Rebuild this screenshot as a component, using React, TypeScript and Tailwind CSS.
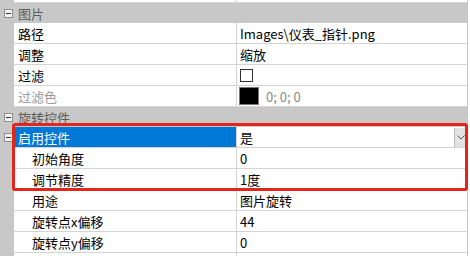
import React from "react";

type Row = {
  label: string;
  value?: string;
  indent?: boolean;
  disabled?: boolean;
  checkbox?: boolean;
  color?: boolean;
  selected?: boolean;
  toggle?: boolean;
  dropdown?: boolean;
};

const sections: { title: string; rows: Row[] }[] = [
  {
    title: "图片",
    rows: [
      { label: "路径", value: "Images\\仪表_指针.png" },
      { label: "调整", value: "缩放" },
      { label: "过滤", checkbox: true },
      { label: "过滤色", disabled: true, color: true, value: "0; 0; 0" },
    ],
  },
  {
    title: "旋转控件",
    rows: [
      { label: "启用控件", value: "是", selected: true, toggle: true, dropdown: true },
      { label: "初始角度", value: "0", indent: true },
      { label: "调节精度", value: "1度", indent: true },
      { label: "用途", value: "图片旋转", indent: true },
      { label: "旋转点x偏移", value: "44", indent: true },
      { label: "旋转点y偏移", value: "0", indent: true },
    ],
  },
];

function Toggle() {
  return (
    <span className="ml-[4px] flex h-[9px] w-[9px] items-center justify-center border border-[#8e8e8e] bg-[#f3f3f3]">
      <span className="h-px w-[5px] bg-[#333]" />
    </span>
  );
}

function PropRow({ row }: { row: Row }) {
  return (
    <div className="flex h-[21px]">
      <div className="flex w-[14px] items-center bg-[#c8c8c8]">{row.toggle && <Toggle />}</div>
      <div className="flex flex-1 border-b border-[#d4d4d4]">
        <div
          className={`flex w-[223px] items-center border-r border-[#d4d4d4] ${
            row.indent ? "pl-[18px]" : "pl-[4px]"
          } ${row.selected ? "bg-[#0078d7] text-white" : row.disabled ? "text-[#9a9a9a]" : "text-black"}`}
        >
          {row.label}
        </div>
        <div className="flex flex-1 items-center pl-[3px] text-black">
          {row.checkbox && <span className="h-[13px] w-[13px] border border-[#333] bg-white" />}
          {row.color && (
            <>
              <span className="ml-[-1px] h-[18px] w-[20px] border border-[#777] bg-black" />
              <span className="ml-[7px] text-[#8a8a8a]">{row.value}</span>
            </>
          )}
          {!row.color && row.value && <span>{row.value}</span>}
          {row.dropdown && (
            <span className="ml-auto flex h-[19px] w-[13px] items-center justify-center border-l border-[#b9b9b9] bg-[#e3e3e3]">
              <svg width="8" height="5" viewBox="0 0 8 5" fill="none">
                <path d="M0.5 0.5 L4 4 L7.5 0.5" stroke="#555" strokeWidth="1" />
              </svg>
            </span>
          )}
        </div>
      </div>
    </div>
  );
}

export default function App() {
  return (
    <div className="relative h-[256px] w-[470px] overflow-hidden bg-white font-['Microsoft_YaHei','Noto_Sans_CJK_SC',sans-serif] text-[13px] leading-none">
      <div className="w-[468px] border-r border-[#c8c8c8]">
        <div className="flex h-[3px]">
          <div className="w-[14px] bg-[#c8c8c8]" />
          <div className="flex flex-1 border-b border-[#d4d4d4]">
            <div className="w-[223px] border-r border-[#d4d4d4]" />
          </div>
        </div>
        {sections.map((s) => (
          <div key={s.title}>
            <div className="flex h-[20px] items-center bg-[#c8c8c8] text-[#5c5c5c]">
              <div className="flex w-[14px] items-center">
                <Toggle />
              </div>
              <span className="pl-[4px]">{s.title}</span>
            </div>
            {s.rows.map((r) => (
              <PropRow key={r.label} row={r} />
            ))}
          </div>
        ))}
        <div className="flex h-[3px]">
          <div className="w-[14px] bg-[#c8c8c8]" />
          <div className="flex flex-1">
            <div className="w-[223px] border-r border-[#d4d4d4]" />
          </div>
        </div>
      </div>
      <div className="pointer-events-none absolute left-[12px] top-[123px] h-[68px] w-[456px] rounded-[3px] border-[3px] border-[#e3261d]" />
    </div>
  );
}
